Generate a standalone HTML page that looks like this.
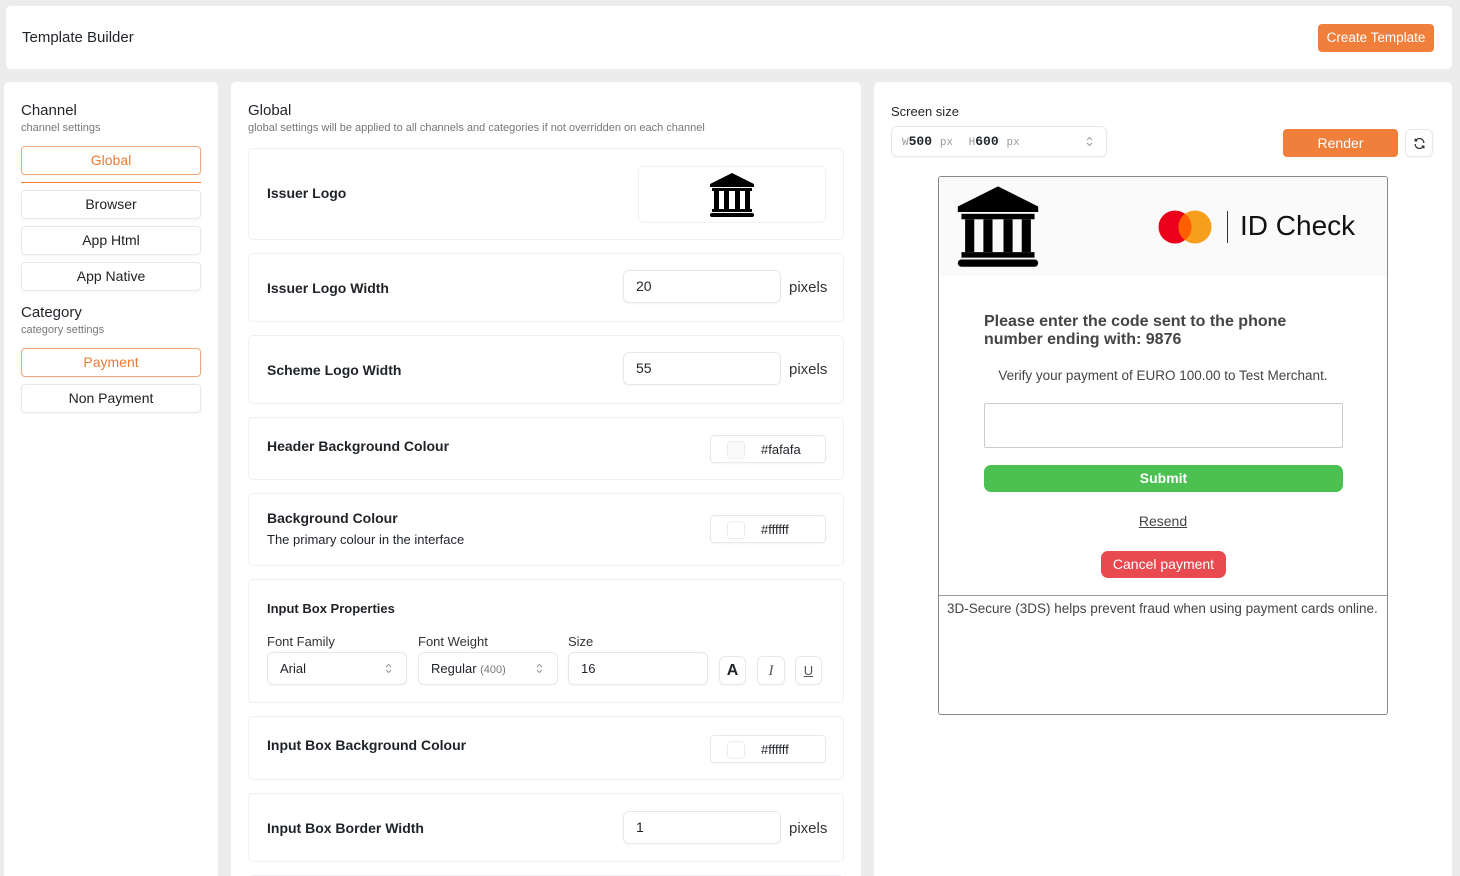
<!DOCTYPE html>
<html><head><meta charset="utf-8"><style>
*{box-sizing:border-box;margin:0;padding:0}
html,body{width:1460px;height:876px;overflow:hidden}
body{background:#ececec;font-family:"Liberation Sans",Arial,sans-serif;color:#1f2328;position:relative}
.card{position:absolute;background:#fff;border-radius:5px}
.abs{position:absolute}
.btn{position:absolute;left:21px;width:180px;height:29px;border:1px solid #e6e8ec;border-radius:4px;text-align:center;line-height:27px;font-size:14px;color:#222;box-shadow:0 1px 2px rgba(0,0,0,.04)}
.btn.on{border-color:#f2a77a;color:#f07a32}
.row{position:absolute;left:248px;width:596px;border:1px solid #eef0f4;border-radius:5px;background:#fff}
.lbl{position:absolute;left:18px;font-size:14px;font-weight:bold;color:#1f2328}
.inp{position:absolute;border:1px solid #e6e8ec;border-radius:6px;background:#fff;font-size:14px;padding-left:12px;box-shadow:0 1px 2px rgba(0,0,0,.04)}
.px{position:absolute;font-size:15px;color:#333}
.col{position:absolute;right:17px;width:116px;height:28px;border:1px solid #e6e8ec;border-radius:4px;font-size:13px;box-shadow:0 1px 2px rgba(0,0,0,.04)}
.col i{position:absolute;left:16px;top:5px;width:18px;height:18px;border:1px solid #eee;border-radius:4px}
.col span{position:absolute;left:50px;top:6px}
.sm{font-size:13px;color:#333}
.chev{position:absolute}
</style></head><body>

<div class="card" style="left:6px;top:6px;width:1446px;height:63px">
  <div class="abs" style="left:16px;top:23px;font-size:15px">Template Builder</div>
  <div class="abs" style="left:1312px;top:18px;width:116px;height:28px;background:#ef7f3b;border-radius:4px;color:#fff;font-size:13.5px;text-align:center;line-height:28px">Create Template</div>
</div>

<div class="card" style="left:4px;top:82px;width:214px;height:800px"></div>
<div class="abs" style="left:21px;top:102px;font-size:15px">Channel</div>
<div class="abs" style="left:21px;top:122px;font-size:11px;color:#777">channel settings</div>
<div class="btn on" style="top:146px">Global</div>
<div class="abs" style="left:21px;top:182px;width:180px;height:1px;background:#f07a32"></div>
<div class="btn" style="top:190px">Browser</div>
<div class="btn" style="top:226px">App Html</div>
<div class="btn" style="top:262px">App Native</div>
<div class="abs" style="left:21px;top:304px;font-size:15px">Category</div>
<div class="abs" style="left:21px;top:324px;font-size:11px;color:#777">category settings</div>
<div class="btn on" style="top:348px">Payment</div>
<div class="btn" style="top:384px">Non Payment</div>

<div class="card" style="left:231px;top:82px;width:630px;height:800px"></div>
<div class="abs" style="left:248px;top:102px;font-size:15px">Global</div>
<div class="abs" style="left:248px;top:122px;font-size:11px;color:#777">global settings will be applied to all channels and categories if not overridden on each channel</div>

<div class="row" style="top:148px;height:92px">
  <div class="lbl" style="top:36px">Issuer Logo</div>
  <div class="abs" style="left:389px;top:17px;width:188px;height:57px;border:1px solid #eef0f4;border-radius:5px">
    <svg class="abs" style="left:70px;top:6px" width="46" height="45" viewBox="0 0 46 45"><path d="M23 0L45 11V14H1V11Z" fill="#000"/><rect x="3" y="15" width="40" height="3" fill="#000"/><rect x="5" y="18" width="5" height="18" fill="#000"/><rect x="15" y="18" width="5" height="18" fill="#000"/><rect x="26" y="18" width="5" height="18" fill="#000"/><rect x="36" y="18" width="5" height="18" fill="#000"/><rect x="3" y="36" width="40" height="3" fill="#000"/><rect x="1" y="40" width="44" height="4" rx="2" fill="#000"/></svg>
  </div>
</div>
<div class="row" style="top:253px;height:69px">
  <div class="lbl" style="top:26px">Issuer Logo Width</div>
  <div class="inp" style="left:374px;top:16px;width:158px;height:33px;line-height:31px">20</div>
  <div class="px" style="left:540px;top:25px">pixels</div>
</div>
<div class="row" style="top:335px;height:69px">
  <div class="lbl" style="top:26px">Scheme Logo Width</div>
  <div class="inp" style="left:374px;top:16px;width:158px;height:33px;line-height:31px">55</div>
  <div class="px" style="left:540px;top:25px">pixels</div>
</div>
<div class="row" style="top:417px;height:63px">
  <div class="lbl" style="top:20px">Header Background Colour</div>
  <div class="col" style="top:17px"><i style="background:#fafafa"></i><span>#fafafa</span></div>
</div>
<div class="row" style="top:493px;height:73px">
  <div class="lbl" style="top:16px">Background Colour</div>
  <div class="abs" style="left:18px;top:38px;font-size:13px">The primary colour in the interface</div>
  <div class="col" style="top:21px"><i></i><span>#ffffff</span></div>
</div>
<div class="row" style="top:579px;height:124px">
  <div class="lbl" style="top:21px;font-size:13px">Input Box Properties</div>
  <div class="abs sm" style="left:18px;top:54px">Font Family</div>
  <div class="abs sm" style="left:169px;top:54px">Font Weight</div>
  <div class="abs sm" style="left:319px;top:54px">Size</div>
  <div class="inp" style="left:18px;top:72px;width:140px;height:33px;line-height:31px;font-size:13px">Arial</div>
  <div class="inp" style="left:169px;top:72px;width:140px;height:33px;line-height:31px;font-size:13px">Regular <span style="color:#777;font-size:11px">(400)</span></div>
  <svg class="chev" style="left:136px;top:83px" width="7" height="11" viewBox="0 0 7 11" fill="none" stroke="#999" stroke-width="1"><path d="M1 4L3.5 1.5L6 4M1 7L3.5 9.5L6 7"/></svg>
  <svg class="chev" style="left:287px;top:83px" width="7" height="11" viewBox="0 0 7 11" fill="none" stroke="#999" stroke-width="1"><path d="M1 4L3.5 1.5L6 4M1 7L3.5 9.5L6 7"/></svg>
  <div class="inp" style="left:319px;top:72px;width:140px;height:33px;line-height:31px;font-size:13px">16</div>
  <div class="inp" style="left:470px;top:76px;width:27px;height:29px;padding:0;text-align:center;line-height:28px;font-weight:bold;font-size:16px">A</div>
  <div class="inp" style="left:508px;top:76px;width:28px;height:29px;padding:0;text-align:center;line-height:28px;font-style:italic;font-family:'Liberation Serif',serif;font-size:15px;color:#555">I</div>
  <div class="inp" style="left:546px;top:76px;width:27px;height:29px;padding:0;text-align:center;line-height:28px;text-decoration:underline;font-size:13px;color:#555">U</div>
</div>
<div class="row" style="top:716px;height:64px">
  <div class="lbl" style="top:20px">Input Box Background Colour</div>
  <div class="col" style="top:18px"><i></i><span>#ffffff</span></div>
</div>
<div class="row" style="top:793px;height:69px">
  <div class="lbl" style="top:26px">Input Box Border Width</div>
  <div class="inp" style="left:374px;top:17px;width:158px;height:33px;line-height:31px">1</div>
  <div class="px" style="left:540px;top:26px">pixels</div>
</div>
<div class="row" style="top:875px;height:20px"></div>

<div class="card" style="left:874px;top:82px;width:578px;height:800px"></div>
<div class="abs" style="left:891px;top:104px;font-size:13px">Screen size</div>
<div class="inp" style="left:891px;top:126px;width:216px;height:31px;line-height:29px;font-family:'Liberation Mono',monospace;font-size:13px;padding-left:10px"><span style="color:#999;font-size:11px">W</span><b>500</b> <span style="color:#999;font-size:11px">px</span>&nbsp; <span style="color:#999;font-size:11px">H</span><b>600</b> <span style="color:#999;font-size:11px">px</span></div>
<svg class="chev" style="left:1086px;top:136px" width="7" height="11" viewBox="0 0 7 11" fill="none" stroke="#999" stroke-width="1"><path d="M1 4L3.5 1.5L6 4M1 7L3.5 9.5L6 7"/></svg>
<div class="abs" style="left:1283px;top:129px;width:115px;height:28px;background:#ef7f3b;border-radius:4px;color:#fff;font-size:14px;text-align:center;line-height:28px">Render</div>
<div class="inp" style="left:1405px;top:129px;width:28px;height:28px;padding:0">
  <svg class="abs" style="left:7px;top:7px" width="13" height="13" viewBox="0 0 24 24" fill="none" stroke="#333" stroke-width="2.4"><path d="M20 11A8 8 0 0 0 5 7M4 3v4h4M4 13a8 8 0 0 0 15 4M20 21v-4h-4"/></svg>
</div>

<div class="abs" style="left:938px;top:176px;width:450px;height:539px;border:1px solid #888;border-radius:3px;background:#fff;overflow:hidden;font-family:'Liberation Sans',Arial,sans-serif">
  <div class="abs" style="left:0;top:0;width:450px;height:99px;background:#fafafa"></div>
  <svg class="abs" style="left:17px;top:9px" width="84" height="83" viewBox="0 0 46 45"><path d="M23 0L45 11V14H1V11Z" fill="#000"/><rect x="3" y="15" width="40" height="3" fill="#000"/><rect x="5" y="18" width="5" height="18" fill="#000"/><rect x="15" y="18" width="5" height="18" fill="#000"/><rect x="26" y="18" width="5" height="18" fill="#000"/><rect x="36" y="18" width="5" height="18" fill="#000"/><rect x="3" y="36" width="40" height="3" fill="#000"/><rect x="1" y="40" width="44" height="4" rx="2" fill="#000"/></svg>
  <svg class="abs" style="left:219px;top:33px" width="54" height="34"><circle cx="17" cy="17" r="16.5" fill="#eb001b"/><circle cx="37" cy="17" r="16.5" fill="#f79e1b"/><path d="M27 3.8a16.5 16.5 0 0 1 0 26.4a16.5 16.5 0 0 1 0-26.4z" fill="#ff5f00"/></svg>
  <div class="abs" style="left:288px;top:34px;width:1px;height:32px;background:#333"></div>
  <div class="abs" style="left:301px;top:33px;font-size:28px;color:#111">ID Check</div>
  <div class="abs" style="left:45px;top:136px;font-size:16px;font-weight:bold;color:#444;line-height:18px;width:340px">Please enter the code sent to the phone number ending with: 9876</div>
  <div class="abs" style="left:0;top:191px;width:448px;text-align:center;font-size:13.5px;color:#444;white-space:nowrap">Verify your payment of EURO 100.00 to Test Merchant.</div>
  <div class="abs" style="left:45px;top:226px;width:359px;height:45px;border:1px solid #ccc;border-radius:2px"></div>
  <div class="abs" style="left:45px;top:288px;width:359px;height:27px;background:#4cc152;border-radius:7px;color:#fff;font-weight:bold;font-size:14px;text-align:center;line-height:27px">Submit</div>
  <div class="abs" style="left:0;top:336px;width:448px;text-align:center;font-size:14px;color:#444;text-decoration:underline">Resend</div>
  <div class="abs" style="left:162px;top:374px;width:125px;height:27px;background:#e84a4f;border-radius:7px;color:#fff;font-size:14px;text-align:center;line-height:27px">Cancel payment</div>
  <div class="abs" style="left:0;top:418px;width:450px;height:1px;background:#999"></div>
  <div class="abs" style="left:8px;top:424px;font-size:13.5px;color:#444;white-space:nowrap">3D-Secure (3DS) helps prevent fraud when using payment cards online.</div>
</div>
</body></html>
